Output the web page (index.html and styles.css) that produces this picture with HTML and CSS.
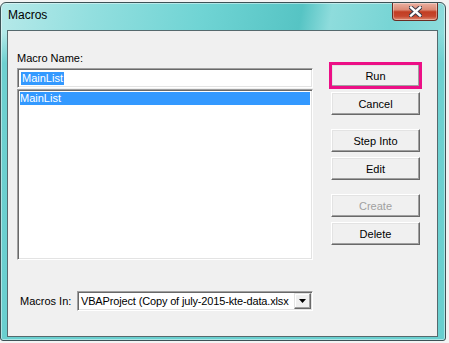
FILE: index.html
```html
<!DOCTYPE html>
<html lang="en">
<head>
  <meta charset="UTF-8">
  <title>Macros</title>
  <link rel="stylesheet" href="styles.css">
</head>
<body>

  <!-- dialog window -->
  <div class="window">
    <div class="titlebar">
      <span class="title">Macros</span>
      <button class="close-btn" aria-label="Close">
        <svg width="13" height="11" viewBox="0 0 13 11">
          <path d="M2 1.5 L11 9.5 M11 1.5 L2 9.5" stroke="#3b3b48" stroke-width="4.4" stroke-linecap="square"/>
          <path d="M2 1.5 L11 9.5 M11 1.5 L2 9.5" stroke="#fff" stroke-width="2.4" stroke-linecap="square"/>
        </svg>
      </button>
    </div>

    <div class="client">
      <!-- left: name, list, location -->
      <div class="left-col">
        <div class="label">Macro Name:</div>
        <div class="textbox"><span class="sel">MainList</span></div>
        <div class="listbox">
          <div class="list-item selected">MainList</div>
        </div>
        <div class="macros-in">
          <span class="label">Macros In:</span>
          <div class="combo">
            <span class="combo-text">VBAProject (Copy of july-2015-kte-data.xlsx</span>
            <span class="drop-btn">
              <svg width="7" height="4" viewBox="0 0 7 4"><path d="M0 0 H7 L3.5 4 Z" fill="#000"/></svg>
            </span>
          </div>
        </div>
      </div>

      <!-- right: command buttons -->
      <div class="right-col">
        <div class="btn-group">
          <button class="btn btn-run">Run</button>
          <button class="btn">Cancel</button>
        </div>
        <div class="btn-group">
          <button class="btn">Step Into</button>
          <button class="btn">Edit</button>
        </div>
        <div class="btn-group">
          <button class="btn" disabled>Create</button>
          <button class="btn">Delete</button>
        </div>
      </div>
    </div>
  </div>

</body>
</html>
```

FILE: styles.css
```css
/* ==== Reset & Base ==== */
* { margin:0; padding:0; box-sizing:border-box; }
html, body { height:100%; width:100%; overflow:hidden; }
body {
  background:#f3f3f3;
  font-family:"Liberation Sans", Arial, sans-serif;
  font-size:11px;
  color:#000;
}

/* ==== Window frame ==== */
.window {
  margin-top:2px;
  width:446px; height:339px;
  border:1px solid #3d5256;
  border-radius:6px 6px 3px 3px;
  background:
    linear-gradient(180deg, rgba(108,208,208,0) 0px, rgba(108,208,208,0) 30px, #6ed0d0 60px, #69cfcf 100%),
    linear-gradient(100deg, #b6e9e9 0%, #93dfdf 18%, #70d4d4 40%, #56c4c4 60%, #8edcdc 66%, #78d5d5 78%, #a3e2e2 100%);
  box-shadow:inset 0 0 0 1px rgba(255,255,255,0.45);
}

.titlebar {
  height:27px;
  display:flex; justify-content:space-between; align-items:flex-start;
}
.title {
  padding:5px 0 0 7px;
  font-size:12px; line-height:14px;
}
.close-btn {
  width:46px; height:18px; margin-right:7px;
  border:1px solid #6a2c22; border-top:none;
  border-radius:0 0 4px 4px;
  background:linear-gradient(180deg, #eab1a2 0%, #db8a75 40%, #c23d22 52%, #c6472e 78%, #df8a70 100%);
  box-shadow:inset 0 0 0 1px rgba(255,255,255,0.35);
  display:flex; align-items:center; justify-content:center;
}

/* ==== Client area ==== */
.client {
  margin-left:6px;
  width:431px; height:307px;
  border:1px solid #55696d;
  background:#f0f0f0;
  display:flex; gap:18px;
  padding-left:9px;
}

.left-col { width:296px; padding-top:21px; display:flex; flex-direction:column; }
.label { line-height:13px; margin-bottom:3px; }

.textbox, .listbox, .combo {
  background:#fff;
  border:1px solid; border-color:#a0a0a0 #fff #fff #a0a0a0;
  box-shadow:inset 1px 1px #696969, inset -1px -1px #e3e3e3;
}
.textbox {
  height:20px; padding-left:3px;
  display:flex; align-items:center;
}
.sel {
  background:#3399ff; color:#fff;
  line-height:13px; padding:0 1px;
}

.listbox { height:171px; margin-top:1px; padding:2px; }
.list-item { line-height:13px; padding-left:0; }
.list-item.selected { background:#3399ff; color:#fff; }

.macros-in {
  margin-top:31px; height:20px;
  display:flex; align-items:center;
  padding-left:3px;
}
.macros-in .label { margin:0; }
.combo {
  width:236px; height:20px; margin-left:auto;
  display:flex; align-items:center;
  padding:2px 1px 2px 3px;
}
.combo-text { flex:1; white-space:nowrap; line-height:13px; letter-spacing:-0.15px; }
.drop-btn {
  width:17px; height:16px; flex:none;
  background:#f0f0f0;
  border:1px solid; border-color:#e3e3e3 #696969 #696969 #e3e3e3;
  box-shadow:inset -1px -1px #a0a0a0, inset 1px 1px #fff;
  display:flex; align-items:center; justify-content:center;
}

/* ==== Buttons ==== */
.right-col { padding-top:33px; display:flex; flex-direction:column; gap:14px; }
.btn-group { display:flex; flex-direction:column; gap:5px; }
.btn {
  width:89px; height:23px;
  font-family:inherit; font-size:11px; color:#000;
  background:#f0f0f0;
  border:1px solid; border-color:#fff #696969 #696969 #fff;
  box-shadow:inset -1px -1px #a0a0a0, inset 1px 1px #e3e3e3;
}
.btn:disabled { color:#a0a0a0; }
.btn-run { outline:3px solid #ec0f86; outline-offset:-1px; }
```
